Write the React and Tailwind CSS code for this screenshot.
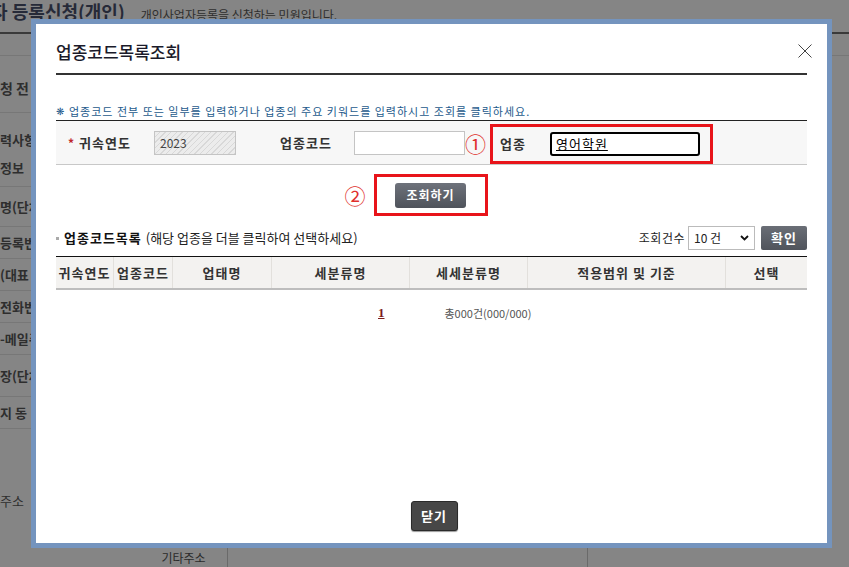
import React from "react";

const kr = "font-['Noto_Sans_CJK_KR','Noto_Sans',sans-serif]";

function BgRow({ h, label, bold = true }) {
  return (
    <div className={`flex items-center border-b border-[#777] ${h}`}>
      <span className={`whitespace-nowrap text-[13px] ${bold ? "font-bold" : ""} text-[#2e2e2e]`}>
        {label}
      </span>
    </div>
  );
}

function Th({ w, children }) {
  return (
    <div className={`flex items-center justify-center border-r border-[#e2e0dc] last:border-r-0 text-[13px] font-bold tracking-[1px] text-[#333] ${w}`}>
      {children}
    </div>
  );
}

export default function App() {
  return (
    <div className={`relative w-[849px] h-[567px] overflow-hidden bg-[#858585] ${kr}`}>
      {/* page behind the dim overlay */}
      <div className="flex h-[34px] items-end border-b-2 border-[#3a3a3a] pb-[7px]">
        <span className="ml-[-42px] whitespace-nowrap text-[18px] font-bold text-[#262a38]">
          사업자 등록신청(개인)
        </span>
        <span className="ml-[16px] mb-[1px] whitespace-nowrap text-[12px] text-[#2e2e2e]">
          개인사업자등록을 신청하는 민원입니다.
        </span>
      </div>
      <div className="flex">
        <div className="w-[150px] shrink-0">
          <div className="h-[22px] border-b border-[#777]" />
          <div className="flex h-[57px] items-center border-b border-[#777] pt-[8px]">
            <span className="whitespace-nowrap text-[14px] font-bold text-[#2e2e2e]">청 전</span>
          </div>
          <div className="flex h-[74px] flex-col justify-center gap-[8px] border-b border-[#777] pt-[8px]">
            <span className="whitespace-nowrap text-[13px] font-bold text-[#2e2e2e]">력사항</span>
            <span className="whitespace-nowrap text-[13px] font-bold text-[#2e2e2e]">정보</span>
          </div>
          <BgRow h="h-[40px]" label="명(단체" />
          <BgRow h="h-[32px]" label=" 등록번" />
          <BgRow h="h-[32px]" label="(대표" />
          <BgRow h="h-[32px]" label=" 전화번" />
          <BgRow h="h-[32px]" label="-메일주" />
          <BgRow h="h-[42px]" label="장(단체" />
          <BgRow h="h-[32px]" label="지 동" />
          <div className="flex h-[130px] items-center pt-[14px]">
            <span className="whitespace-nowrap text-[13px] text-[#2e2e2e]">주소</span>
          </div>
        </div>
        <div className="flex-1">
          <div className="h-[22px] border-b border-[#777]" />
        </div>
      </div>
      <div className="absolute left-0 top-[548px] flex h-[19px] w-full">
        <div className="w-[140px]" />
        <div className="flex w-[88px] items-center justify-center border-r border-[#6a6a6a] text-[12px] text-[#2a2a2a]">
          기타주소
        </div>
        <div className="w-[360px] border-r border-[#6a6a6a]" />
      </div>

      {/* modal */}
      <div className="absolute left-[31px] top-[19px] flex h-[529px] w-[801px] flex-col border-[5px] border-[#7494be] bg-white px-[20px]">
        <div className="flex h-[51px] shrink-0 items-center justify-between border-b-2 border-[#333] pt-[6px]">
          <span className="text-[17px] font-medium text-[#1a1a2a]">업종코드목록조회</span>
          <svg width="16" height="16" viewBox="0 0 16 16" className="mr-[-6px] mt-[-2px]">
            <path d="M1.5 1.5 L14.5 14.5 M14.5 1.5 L1.5 14.5" stroke="#444" strokeWidth="1" />
          </svg>
        </div>

        <div className="mt-[27px] flex h-[18px] items-center gap-[4px] text-[11px] tracking-[1px] text-[#1d5a8c]">
          <span className="text-[10px] leading-none">❋</span>
          <span>업종코드 전부 또는 일부를 입력하거나 업종의 주요 키워드를 입력하시고 조회를 클릭하세요.</span>
        </div>

        <div className="flex h-[45px] items-center border-t border-b border-t-[#222] border-b-[#c8c8c8] bg-[#f7f7f7] pl-[12px]">
          <div className="flex w-[86px] items-center">
            <span className="text-[12px] font-bold text-[#c0272d]">*</span>
            <span className="ml-[5px] text-[13px] font-bold tracking-[1px] text-[#333]">귀속연도</span>
          </div>
          <div className="flex h-[24px] w-[82px] items-center border border-[#c4c4c4] bg-[repeating-linear-gradient(135deg,#ececec_0px,#ececec_3px,#d8d8d8_3px,#d8d8d8_4px)] pl-[5px] text-[12px] text-[#444]">
            2023
          </div>
          <div className="w-[118px] pl-[44px] text-[13px] font-bold tracking-[1px] text-[#333]">업종코드</div>
          <div className="h-[24px] w-[111px] border border-[#c4c4c4] bg-white" />
          <span className="w-[20px] mt-[2px] text-center text-[21px] leading-none text-[#e0302c]">①</span>
          <div className="ml-[5px] flex h-[40px] w-[223px] items-center self-end border-[3px] border-[#e8141a] pl-[7px]">
            <span className="w-[50px] text-[13px] font-bold tracking-[1px] text-[#333]">업종</span>
            <div className="flex h-[24px] w-[150px] items-center rounded-[3px] border-2 border-black bg-white pl-[4px] text-[13px] tracking-[1px] text-black underline">
              영어학원
            </div>
          </div>
        </div>

        <div className="mt-[9px] flex items-center justify-center pr-[31px]">
          <span className="mr-[8px] text-[21px] leading-none text-[#e0302c]">②</span>
          <div className="flex h-[42px] w-[114px] items-center justify-center border-[3px] border-[#e8141a]">
            <div className="flex h-[25px] w-[71px] items-center justify-center rounded-[3px] bg-gradient-to-b from-[#6e727b] to-[#4f535b] text-[12px] font-bold tracking-[1px] text-white">
              조회하기
            </div>
          </div>
        </div>

        <div className="mt-[10px] flex h-[24px] items-center">
          <span className="h-[3px] w-[3px] bg-[#aaa]" />
          <span className="ml-[5px] text-[13px] font-bold tracking-[1px] text-[#111]">업종코드목록</span>
          <span className="ml-[4px] text-[13px] text-[#222]">(해당 업종을 더블 클릭하여 선택하세요)</span>
          <span className="ml-auto text-[12px] tracking-[0.5px] text-[#222]">조회건수</span>
          <div className="ml-[3px] flex h-[24px] w-[67px] items-center justify-between border border-[#bbb] bg-white px-[5px] text-[12px] text-[#222]">
            <span>10 건</span>
            <svg width="9" height="6" viewBox="0 0 9 6">
              <path d="M1 1 L4.5 4.5 L8 1" stroke="#111" strokeWidth="1.8" fill="none" />
            </svg>
          </div>
          <div className="ml-[6px] flex h-[24px] w-[46px] items-center justify-center rounded-[2px] bg-gradient-to-b from-[#6a6e76] to-[#50545c] text-[13px] font-bold tracking-[1px] text-white">
            확인
          </div>
        </div>

        <div className="mt-[6px] flex h-[34px] border-t border-b-2 border-t-[#111] border-b-[#bdbdbd] bg-[#f3f2f0]">
          <Th w="w-[58px]">귀속연도</Th>
          <Th w="w-[59px]">업종코드</Th>
          <Th w="w-[99px]">업태명</Th>
          <Th w="w-[138px]">세분류명</Th>
          <Th w="w-[118px]">세세분류명</Th>
          <Th w="w-[198px]">적용범위 및 기준</Th>
          <Th w="flex-1">선택</Th>
        </div>

        <div className="mt-[14px] flex h-[18px] items-center">
          <span className="ml-[322px] font-['Liberation_Serif',serif] text-[13px] font-bold text-[#7a1c1c] underline">1</span>
          <span className="ml-[60px] text-[11px] text-[#555]">총000건(000/000)</span>
        </div>

        <div className="mt-auto mb-[12px] flex justify-center pl-[5px]">
          <div className="flex h-[30px] w-[47px] items-center justify-center rounded-[3px] border border-[#2a2a2a] bg-[#474747] text-[13px] font-bold tracking-[1px] text-white shadow-[0_1px_1px_rgba(0,0,0,0.4)]">
            닫기
          </div>
        </div>
      </div>
    </div>
  );
}
